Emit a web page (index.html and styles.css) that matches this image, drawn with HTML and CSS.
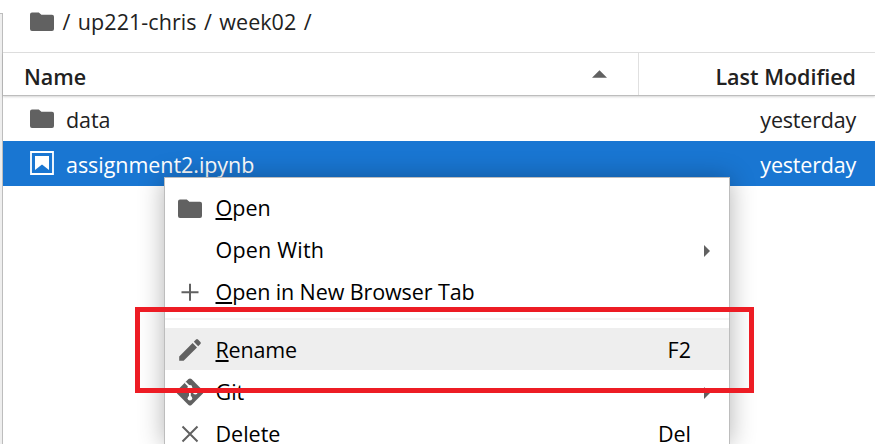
FILE: index.html
```html
<!DOCTYPE html>
<html lang="en">
<head>
<meta charset="utf-8">
<title>File Browser</title>
<link rel="stylesheet" href="styles.css">
</head>
<body>
<svg class="defs" width="0" height="0" aria-hidden="true">
  <symbol id="folder" viewBox="0 0 24 20"><path d="M2 .5h6.8l2.6 2.2H22q2 0 2 2V17q0 2-2 2H2q-2 0-2-2V2.5q0-2 2-2z"/></symbol>
</svg>
<div class="app">
  <div class="gutter"></div>
  <main class="browser">
    <nav class="crumbs">
      <svg class="folder"><use href="#folder"/></svg>
      <span class="path">/ up221-chris / week02 /</span>
    </nav>
    <header class="head">
      <div class="head-name"><span class="t-name">Name</span><svg class="sort" viewBox="0 0 16 8"><path d="M0 8L8 0l8 8z"/></svg></div>
      <div class="head-date"><span class="t-modified">Last Modified</span></div>
    </header>
    <div class="row">
      <svg class="folder"><use href="#folder"/></svg>
      <span class="file t-data">data</span><span class="date">yesterday</span>
    </div>
    <div class="row selected">
      <svg class="notebook" viewBox="0 0 24 24"><path d="M1 1h22v22H1z" fill="none" stroke="#fff" stroke-width="1.8"/><path d="M5 5h14v14l-7-5.5L5 19z" fill="#fff"/></svg>
      <span class="file t-notebook">assignment2.ipynb</span><span class="date">yesterday</span>
    </div>
  </main>
</div>
<div class="menu">
  <div class="item"><div class="icon"><svg class="folder"><use href="#folder"/></svg></div><span class="label t-open"><u>O</u>pen</span></div>
  <div class="item"><div class="icon"></div><span class="label t-with">Open With</span><svg class="arrow" viewBox="0 0 6 12"><path d="M0 0l6 6-6 6z"/></svg></div>
  <div class="item"><div class="icon"><svg class="glyph" viewBox="0 0 24 24"><path d="M12 3.7v17M3.5 12.2h17" fill="none" stroke="#616161" stroke-width="2"/></svg></div><span class="label t-tab"><u>O</u>pen in New Browser Tab</span></div>
  <div class="separator"></div>
  <div class="item active"><div class="icon"><svg class="glyph" viewBox="0 0 24 24"><path d="M1.2 18.4L14.6 5l4.4 4.4L5.6 22.8H1.2zM15.8 3.8L18 1.6q1-1 2 0l2.4 2.4q1 1 0 2l-2.2 2.2z"/></svg></div><span class="label t-rename"><u>R</u>ename</span><span class="key t-f2">F2</span></div>
  <div class="item"><div class="icon"><svg class="git" viewBox="0 0 28 28"><path d="M12.5 1.1q1.5-1.4 3 0L26.9 12.5q1.4 1.5 0 3L15.5 26.9q-1.5 1.4-3 0L1.1 15.5q-1.4-1.5 0-3z"/><path d="M9.2 4.4l4.7 4.8v11M14.3 9.5l4.8 4.7" fill="none" stroke="#fff" stroke-width="1.8"/><g fill="#fff"><circle cx="13.9" cy="9.2" r="2.3"/><circle cx="13.9" cy="20.2" r="2.3"/><circle cx="19.3" cy="14.3" r="2.3"/></g></svg></div><span class="label t-git">Git</span><svg class="arrow" viewBox="0 0 6 12"><path d="M0 0l6 6-6 6z"/></svg></div>
  <div class="item"><div class="icon"><svg class="glyph" viewBox="0 0 24 24"><path d="M4.5 4.5l15 15m0-15l-15 15" fill="none" stroke="#616161" stroke-width="2"/></svg></div><span class="label t-delete"><u>D</u>elete</span><span class="key t-del">Del</span></div>
</div>
<div class="callout"></div>
</body>
</html>
```
FILE: styles.css
```css
* { box-sizing: border-box; }
html, body { margin: 0; height: 100%; overflow: hidden; }
body { position: relative; background: #fff; color: #212121; font: 21.5px/30px "Open Sans", "Noto Sans", sans-serif; white-space: nowrap; }
svg { display: block; flex: none; fill: #616161; }
.defs { position: absolute; }
.app { display: flex; height: 444px; }
.gutter { width: 3px; margin-top: 13px; background: #eee; border-top: 1px solid #bdbdbd; border-right: 1px solid #bdbdbd; }
.browser { flex: 1; }
.folder { width: 24px; height: 20px; }
.crumbs { height: 53px; border-bottom: 1px solid #e0e0e0; padding: 0 0 9px 27px; display: flex; align-items: center; }
.path { margin-left: 8.5px; word-spacing: 1.8px; letter-spacing: 0.05px; }
.head { display: flex; height: 43px; border-bottom: 1px solid #bdbdbd; box-shadow: 0 1px 2px rgba(0,0,0,.16); font-weight: 600; }
.head-name { width: 636px; border-right: 1px solid #e0e0e0; padding: 0 31px 0 21px; display: flex; align-items: center; justify-content: space-between; }
.head-name span, .head-date span { padding-top: 6px; }
.sort { width: 15px; height: 8px; }
.head-date { flex: 1; display: flex; align-items: center; justify-content: flex-end; padding-right: 19px; }
.row { height: 45px; display: flex; align-items: center; padding: 0 19px 0 27px; }
.selected { background: #1976d2; color: #fff; }
.notebook { width: 24px; height: 24px; margin-bottom: 1px; }
.file { margin-left: 12px; padding-top: 3px; letter-spacing: -0.05px; }
.date { margin-left: auto; padding-top: 3px; letter-spacing: -0.2px; }
.menu { position: absolute; left: 164px; top: 177px; width: 566px; height: 267px; overflow: hidden; padding-top: 9px; background: #fff; border: 1px solid #bdbdbd; border-bottom: 0; color: #000; box-shadow: 0 1px 24px rgba(0,0,0,.3); clip-path: inset(-40px -40px 0 -40px); }
.item { height: 42px; display: flex; align-items: center; padding-right: 38px; }
.icon { width: 48px; height: 42px; padding-left: 2px; display: flex; align-items: center; justify-content: center; }
.icon .folder { margin-top: 1px; }
.glyph { width: 24px; height: 24px; }
.git { width: 28px; height: 28px; }
.label { margin-left: 2.5px; }
.t-with { letter-spacing: 0.2px; }
.t-tab { letter-spacing: -0.1px; }
.t-rename { letter-spacing: -0.2px; }
u { text-decoration-thickness: 2px; text-underline-offset: 2px; }
.key { margin-left: auto; }
.arrow { width: 6px; height: 12px; margin-left: auto; margin-right: -19px; margin-top: 2px; }
.separator { height: 15px; padding-top: 5px; }
.separator::before { content: ""; display: block; height: 2px; background: #f5f5f5; }
.active { background: #eee; padding-top: 1px; margin-bottom: 1px; }
.callout { position: absolute; left: 135px; top: 307px; width: 619px; height: 86px; border: 5px solid #ed1c24; }
```
